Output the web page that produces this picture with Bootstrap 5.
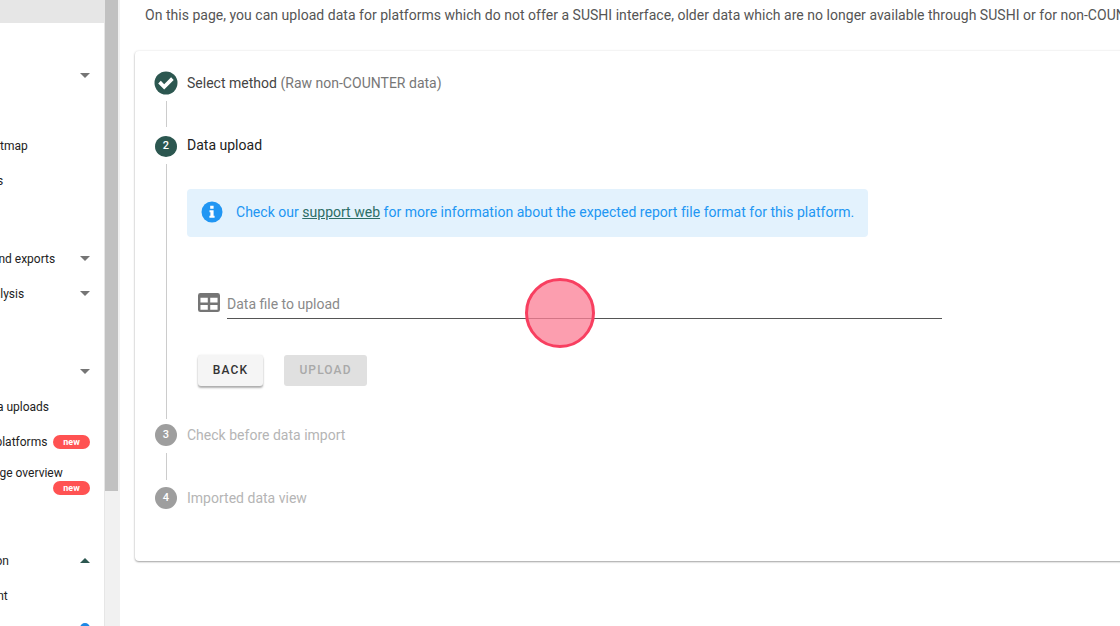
<!DOCTYPE html>
<html lang="en"><head><meta charset="utf-8"><title>Upload</title>
<link href="https://cdn.jsdelivr.net/npm/bootstrap@5.3.0/dist/css/bootstrap.min.css" rel="stylesheet">
<style>
html,body{height:626px;overflow:hidden;background:#fff;font-family:Roboto,sans-serif}
.shell{height:626px;overflow:hidden;position:relative}
.side{width:105px;height:626px;overflow:hidden;flex:none;border-right:1px solid #e6e6e6;background:#fff}
.side-in{width:256px;margin-left:-151px}
.side-row{height:35px;padding-left:88px;padding-right:15px;font-size:12px;font-weight:400;color:#222;white-space:nowrap}
.side-row .lbl{flex:1;min-width:0}
.sel{height:23px;background:#e6e6e6;margin-right:1px}
.gap-0{margin-top:35px}.gap-a{margin-top:8px}.gap-b{margin-top:43px}.gap-c{margin-top:40px}
.caret-d,.caret-u{width:0;height:0;border-left:5px solid transparent;border-right:5px solid transparent}
.caret-d{border-top:5px solid #757575}.caret-u{border-bottom:5px solid #2c5750}
.tag{width:37px;height:14px;line-height:14px;background:#ff5252;color:#fff;border-radius:7px;font-size:9px;font-weight:700;text-align:center;flex:none}
.two{height:44px;line-height:14px;padding-top:7px}
.two .lbl2{height:15px}
.dot{width:10px;height:10px;border-radius:50%;background:#1e88e5;margin-top:10px}
.sbar{width:15px;height:626px;background:#f1f1f1;flex:none}
.thumb{height:491px;width:13px;background:#c1c1c1}
.pg{flex:1;min-width:0;padding-left:15px}
.intro{font-size:14px;color:#555;white-space:nowrap;margin:5px 0 0 10px;line-height:20px;height:46px;letter-spacing:.025px}
.stepcard{width:1100px;height:510px;background:#fff;border:0;border-radius:4px;padding:20px 0 0 20px;box-shadow:0 1px 2px rgba(0,0,0,.35),0 0 3px rgba(0,0,0,.08)}
.st-row{height:24px;gap:10px;font-size:14px;color:#444;line-height:24px;letter-spacing:.01px}
.st-row .sub{color:#777}
.st-no{width:22px;height:22px;border-radius:50%;background:#2c5750;color:#fff;font-size:11px;font-weight:500;line-height:21px;text-align:center;flex:none}
.st-off .st-no{background:#9e9e9e}
.st-off{color:#b5b5b5}
.st-cur{color:#222}
.st-cur .st-no{margin-top:2px;height:21px;line-height:19px}
.conn{height:38px;margin-left:11px;padding:6px 0}
.conn i{display:block;width:1px;height:100%;background:#ccc}
.st-body{height:266px;margin-left:11px}
.rail{display:block;width:1px;background:#ccc;margin:7px 0 4px;flex:none}
.st-main{padding:32px 0 0 20px;min-width:0}
.note{width:681px;height:48px;background:#e3f2fd;color:#2196f3;border:0;border-radius:4px;padding:0 0 2px 14px;margin:0;gap:13px;font-size:14px;letter-spacing:.02px;white-space:nowrap}
.note a{color:#2c6e66}
.fld{width:744px;margin:47px 0 0 11px;gap:7px;height:35px}
.fld-ph{flex:1;border-bottom:1px solid #555;height:35px;font-size:14px;color:#8a8a8a;line-height:24px;padding-top:8px}
.acts{margin:36px 0 0 11px;gap:21px}
.bt{height:31px;font-size:12px;font-weight:500;letter-spacing:1.1px;border:0;border-radius:3px;padding:0 0 1px;text-transform:uppercase}
.bt-a{width:65px;background:#f5f5f5;color:#333;box-shadow:0 2px 2px rgba(0,0,0,.3),0 0 2px rgba(0,0,0,.1)}
.btn.bt-b:disabled{width:83px;background:#e0e0e0;color:#a9a9a9;opacity:1}
.conn2{height:39px}
.click{position:absolute;left:525px;top:278px;width:70px;height:70px;border-radius:50%;background:rgba(251,128,150,.76);border:3px solid #f83f60}
</style></head>
<body>
<div class="shell d-flex">
  <nav class="side"><div class="side-in">
    <div class="sel"></div>
    <div class="side-row d-flex align-items-center gap-0"><span class="lbl"></span><span class="caret-d"></span></div>
    <div class="side-row d-flex align-items-center"><span class="lbl"></span></div>
    <div class="side-row d-flex align-items-center"><span class="lbl">Interest heatmap</span></div>
    <div class="side-row d-flex align-items-center"><span class="lbl">Publications</span></div>
    <div class="side-row d-flex align-items-center"><span class="lbl"></span></div>
    <div class="side-row d-flex align-items-center gap-a"><span class="lbl">Reporting and exports</span><span class="caret-d"></span></div>
    <div class="side-row d-flex align-items-center"><span class="lbl">Overlap analysis</span><span class="caret-d"></span></div>
    <div class="side-row d-flex align-items-center gap-b"><span class="lbl"></span><span class="caret-d"></span></div>
    <div class="side-row d-flex align-items-center"><span class="lbl">Manual data uploads</span></div>
    <div class="side-row d-flex align-items-center"><span class="lbl">Supported platforms</span><span class="tag">new</span></div>
    <div class="side-row two"><div class="lbl2">Journal usage overview</div><div class="d-flex justify-content-end"><span class="tag">new</span></div></div>
    <div class="side-row d-flex align-items-center gap-c"><span class="lbl">Configuration</span><span class="caret-u"></span></div>
    <div class="side-row d-flex align-items-center"><span class="lbl">Management</span></div>
    <div class="side-row d-flex justify-content-end"><span class="dot"></span></div>
  </div></nav>
  <div class="sbar"><div class="thumb"></div></div>
  <main class="pg">
    <p class="intro">On this page, you can upload data for platforms which do not offer a SUSHI interface, older data which are no longer available through SUSHI or for non-COUNTER data.</p>
    <section class="card stepcard">
      <div class="st-row d-flex align-items-center">
        <svg width="24" height="24" viewBox="0 0 24 24" class="flex-shrink-0" style="margin:0 -1px"><circle cx="12" cy="12" r="11.5" fill="#2c5750"/><path d="M4.2 12.4l2.6-2.6 3.4 3.4 6.9-6.9 2.6 2.6-9.5 9.5z" fill="#fff"/></svg>
        <span>Select method <span class="sub">(Raw non-COUNTER data)</span></span>
      </div>
      <div class="conn"><i></i></div>
      <div class="st-row st-cur d-flex align-items-center"><span class="st-no">2</span><span>Data upload</span></div>
      <div class="st-body d-flex">
        <i class="rail"></i>
        <div class="st-main">
        <div class="alert note d-flex align-items-center" role="alert">
          <svg width="22" height="22" viewBox="0 0 22 22" class="flex-shrink-0"><circle cx="11" cy="11" r="10.5" fill="#2196f3"/><path d="M9.2 4.8h3.4v2.9H9.2zM8.5 9.2h4.1v5.6h1v2H8.4v-2h1v-3.6h-.9z" fill="#fff"/></svg>
          <span>Check our <a href="#">support web</a> for more information about the expected report file format for this platform.</span>
        </div>
        <div class="fld d-flex align-items-start">
          <svg width="22" height="19" viewBox="3 4 18 16" preserveAspectRatio="none" class="flex-shrink-0" style="margin-top:9px"><path fill="#757575" d="M5,4H19A2,2 0 0,1 21,6V18A2,2 0 0,1 19,20H5A2,2 0 0,1 3,18V6A2,2 0 0,1 5,4M5,8V12H11V8H5M13,8V12H19V8H13M5,14V18H11V14H5M13,14V18H19V14H13Z"/></svg>
          <div class="fld-ph">Data file to upload</div>
        </div>
        <div class="acts d-flex">
          <button class="btn bt bt-a" type="button">Back</button>
          <button class="btn bt bt-b" type="button" disabled>Upload</button>
        </div>
        </div>
      </div>
      <div class="st-row st-off d-flex align-items-center"><span class="st-no">3</span><span>Check before data import</span></div>
      <div class="conn conn2"><i></i></div>
      <div class="st-row st-off d-flex align-items-center"><span class="st-no">4</span><span>Imported data view</span></div>
    </section>
  </main>
  <div class="click"></div>
</div>
<script src="https://cdn.jsdelivr.net/npm/bootstrap@5.3.0/dist/js/bootstrap.bundle.min.js"></script>
</body></html>
